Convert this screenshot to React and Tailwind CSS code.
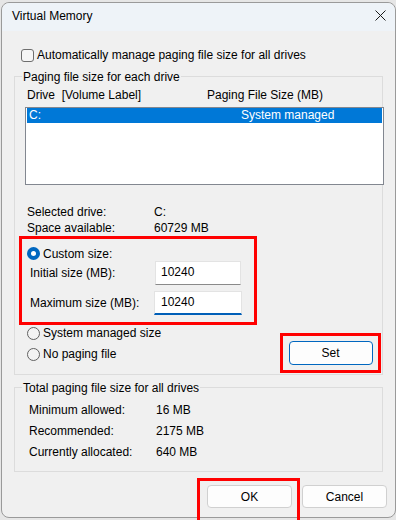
import React from "react";

function Radio({ checked }) {
  return checked ? (
    <div className="w-[13px] h-[13px] rounded-full bg-[#0067c0] flex items-center justify-center shrink-0">
      <div className="w-[5px] h-[5px] rounded-full bg-white" />
    </div>
  ) : (
    <div className="w-[13px] h-[13px] rounded-full border border-[#616161] bg-[#f3f3f3] shrink-0" />
  );
}

export default function App() {
  return (
    <div
      className="w-[396px] h-[520px] bg-[#e6e6e6] overflow-hidden pt-[2px] pl-[1px] text-[12px] leading-[16px] text-black"
      style={{ fontFamily: '"Liberation Sans", Arial, sans-serif' }}
    >
      <div className="w-[395px] h-[516px] border border-[#9a9a9a] rounded-[8px] bg-[#f0f0f0]">
        {/* title bar */}
        <div className="h-[28px] bg-[#eef3f8] rounded-t-[8px] flex items-center pl-[10px] pr-[9px]">
          <span className="mt-[-2px]">Virtual Memory</span>
          <svg className="ml-auto mt-[-3px]" width="11" height="11" viewBox="0 0 11 11">
            <path d="M0.5 0.5 L10.5 10.5 M10.5 0.5 L0.5 10.5" stroke="#1a1a1a" strokeWidth="1" />
          </svg>
        </div>

        {/* checkbox */}
        <div className="mt-[16px] pl-[19px] flex items-center gap-[3px] h-[16px]">
          <div className="w-[13px] h-[13px] rounded-[3px] border border-[#6e6e6e] bg-[#f6f6f6]" />
          <span>Automatically manage paging file size for all drives</span>
        </div>

        {/* group 1 */}
        <div className="ml-[12px] mt-[13px] w-[369px] h-[299px] border border-[#dcdcdc]">
          <div className="-mt-[8px] ml-[7px] px-[1px] w-fit bg-[#f0f0f0]">Paging file size for each drive</div>
          <div className="mt-[2px] pl-[12px] flex">
            <span className="w-[180px]">Drive&nbsp;&nbsp;[Volume Label]</span>
            <span>Paging File Size (MB)</span>
          </div>
          <div className="mt-[4px] ml-[10px] w-[359px] h-[78px] border border-[#828790] bg-white">
            <div className="ml-[1px] mr-[1px] h-[15px] bg-[#0078d7] text-white flex items-center pl-[2px] leading-[15px]">
              <span className="w-[212px]">C:</span>
              <span>System managed</span>
            </div>
          </div>
          <div className="mt-[19px] pl-[12px] flex">
            <span className="w-[127px]">Selected drive:</span>
            <span>C:</span>
          </div>
          <div className="pl-[12px] flex">
            <span className="w-[127px]">Space available:</span>
            <span>60729 MB</span>
          </div>
          {/* red box */}
          <div className="ml-[4px] w-[238px] h-[89px] border-[3px] border-[#ff0000]">
            <div className="mt-[7px] pl-[5px] h-[15px] flex items-center gap-[3px]">
              <Radio checked />
              <span>Custom size:</span>
            </div>
            <div className="pl-[8px] flex items-center h-[24px]">
              <span className="w-[125px]">Initial size (MB):</span>
              <div className="w-[86px] h-[24px] bg-white border border-[#e3e3e3] border-b-[#8a8a8a] pl-[5px] flex items-center pb-[2px]">10240</div>
            </div>
            <div className="mt-[6px] pl-[8px] flex items-center h-[24px]">
              <span className="w-[124px]">Maximum size (MB):</span>
              <div className="w-[88px] h-[24px] bg-white border border-[#e3e3e3] border-b-2 border-b-[#005fb8] pl-[6px] flex items-center pb-[1px]">10240</div>
            </div>
          </div>
          <div className="flex">
            <div className="pl-[12px] flex flex-col gap-[5px]">
              <div className="h-[16px] flex items-center gap-[3px]">
                <Radio />
                <span>System managed size</span>
              </div>
              <div className="h-[16px] flex items-center gap-[3px]">
                <Radio />
                <span>No paging file</span>
              </div>
            </div>
            <div className="ml-auto mr-[1px] mt-[8px] w-[101px] h-[40px] border-[3px] border-[#ff0000] flex items-center justify-center">
              <div className="w-[84px] h-[24px] rounded-[4px] border border-[#0067c0] bg-[#fdfdfd] flex items-center justify-center">
                Set
              </div>
            </div>
          </div>
        </div>

        {/* group 2 */}
        <div className="ml-[12px] mt-[12px] w-[369px] border border-[#dcdcdc] pb-[11px]">
          <div className="-mt-[8px] ml-[7px] px-[1px] w-fit bg-[#f0f0f0]">Total paging file size for all drives</div>
          <div className="mt-[6px] pl-[14px] flex flex-col gap-[5px]">
            <div className="flex"><span className="w-[127px]">Minimum allowed:</span><span>16 MB</span></div>
            <div className="flex"><span className="w-[127px]">Recommended:</span><span>2175 MB</span></div>
            <div className="flex"><span className="w-[127px]">Currently allocated:</span><span>640 MB</span></div>
          </div>
        </div>

        {/* buttons */}
        <div className="mt-[6px] ml-[195px] flex items-start gap-[2px]">
          <div className="w-[103px] h-[45px] border-[3px] border-[#ff0000] pt-[4px] pl-[7px]">
            <div className="w-[85px] h-[23px] rounded-[4px] border border-[#d0d0d0] bg-[#fdfdfd] flex items-center justify-center">OK</div>
          </div>
          <div className="mt-[7px] w-[85px] h-[23px] rounded-[4px] border border-[#d0d0d0] bg-[#fdfdfd] flex items-center justify-center">Cancel</div>
        </div>
      </div>
    </div>
  );
}
